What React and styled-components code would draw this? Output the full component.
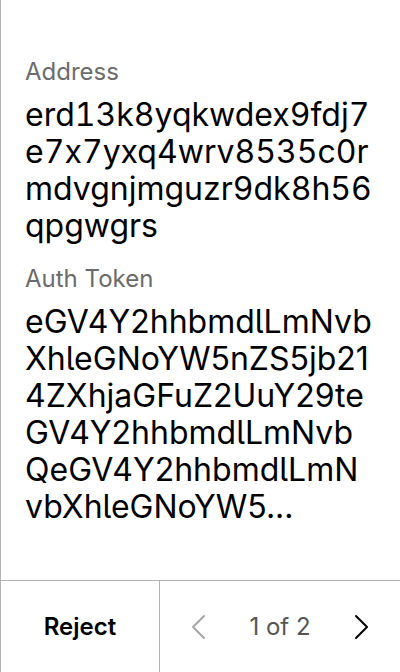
import styled, { createGlobalStyle } from "styled-components";

const GlobalStyle = createGlobalStyle`
  html, body {
    margin: 0;
    padding: 0;
    background: #fff;
  }
  body {
    font-family: Inter, "Noto Sans", sans-serif;
    font-feature-settings: "cv05" 1, "calt" 0;
    -webkit-font-smoothing: antialiased;
  }
`;

const Screen = styled.div`
  height: 100vh;
  display: flex;
  flex-direction: column;
  border-left: 1px solid #b3b3b3;
  box-sizing: border-box;
`;

const Body = styled.div`
  flex: 1;
  padding: 57px 24px 0 24px;
  overflow: hidden;
`;

const Label = styled.div`
  font-size: 24px;
  line-height: 29px;
  color: #6b6b6b;
  margin-bottom: 10px;
`;

const Value = styled.div`
  font-size: 32px;
  line-height: 37px;
  color: #000;
  word-break: break-all;
  font-feature-settings: "cv05" 1, "calt" 0
    ${(p) => (p.$tabular ? `, "tnum" 1` : "")};
  margin-bottom: 20px;
`;

const Footer = styled.div`
  height: 92px;
  display: flex;
  border-top: 1px solid #b3b3b3;
  box-sizing: border-box;
`;

const RejectButton = styled.button`
  width: 159px;
  border: none;
  border-right: 1px solid #b3b3b3;
  background: none;
  font-family: inherit;
  font-feature-settings: inherit;
  font-size: 24px;
  font-weight: 600;
  color: #000;
`;

const Pager = styled.div`
  flex: 1;
  display: flex;
  align-items: center;
  justify-content: space-between;
  padding: 0 26px;
`;

const Arrow = styled.button`
  border: none;
  background: none;
  padding: 0;
  display: flex;
  color: ${(p) => (p.disabled ? "#a6a6a6" : "#000")};
`;

const PageText = styled.span`
  font-size: 24px;
  color: #555;
`;

const Chevron = ({ dir }) => (
  <svg width="28" height="28" viewBox="0 0 28 28" fill="none">
    <path
      d={dir === "left" ? "M18 3 L7 14 L18 25" : "M10 3 L21 14 L10 25"}
      stroke="currentColor"
      strokeWidth="2"
      strokeLinecap="round"
      strokeLinejoin="round"
    />
  </svg>
);

const address = "erd13k8yqkwdex9fdj7e7x7yxq4wrv8535c0rmdvgnjmguzr9dk8h56qpgwgrs";
const token =
  "eGV4Y2hhbmdlLmNvbXhleGNoYW5nZS5jb214ZXhjaGFuZ2UuY29teGV4Y2hhbmdlLmNvbQeGV4Y2hhbmdlLmNvbXhleGNoYW5nZS5jb20";

const truncate = (s, n) => (s.length > n ? s.slice(0, n) + "..." : s);

export default function App() {
  return (
    <>
      <GlobalStyle />
      <Screen>
        <Body>
          <Label>Address</Label>
          <Value $tabular>{address}</Value>
          <Label>Auth Token</Label>
          <Value>{truncate(token, 97)}</Value>
        </Body>
        <Footer>
          <RejectButton>Reject</RejectButton>
          <Pager>
            <Arrow disabled>
              <Chevron dir="left" />
            </Arrow>
            <PageText>1 of 2</PageText>
            <Arrow>
              <Chevron dir="right" />
            </Arrow>
          </Pager>
        </Footer>
      </Screen>
    </>
  );
}
